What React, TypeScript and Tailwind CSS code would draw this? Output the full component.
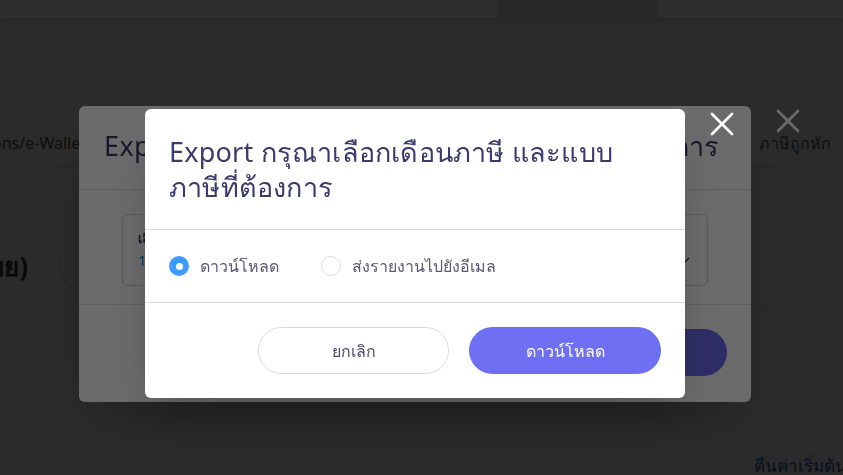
import React, { useState } from 'react';

function CloseIcon({ className }: { className: string }) {
  return (
    <svg viewBox="0 0 24 24" className={className} fill="none" stroke="currentColor" strokeWidth="2.6" strokeLinecap="round">
      <line x1="2" y1="2" x2="22" y2="22" />
      <line x1="22" y1="2" x2="2" y2="22" />
    </svg>
  );
}

function Radio({ checked, label, onClick }: { checked: boolean; label: string; onClick: () => void }) {
  return (
    <button type="button" onClick={onClick} className="flex items-center gap-[11px]">
      {checked ? (
        <span className="w-5 h-5 rounded-full bg-[#3d9bff] flex items-center justify-center">
          <span className="w-[7px] h-[7px] rounded-full bg-white" />
        </span>
      ) : (
        <span className="w-5 h-5 rounded-full border border-[#dcdce5] bg-white" />
      )}
      <span className="text-[16px] leading-6 text-[#5a5a76]">{label}</span>
    </button>
  );
}

export default function App() {
  const [mode, setMode] = useState<'download' | 'email'>('download');

  return (
    <div className="min-h-screen bg-[#f0f0f0] font-['Noto_Sans','Open_Sans',sans-serif] overflow-hidden">
      {/* Page behind the modals */}
      <header className="h-[18px] bg-white shadow-md flex">
        <div className="w-[497px]" />
        <div className="w-[161px] bg-[#dedede]" />
        <div className="flex-1" />
      </header>

      <div className="mt-[102px] h-[47px] border-b border-[#d6d6d6] flex items-center justify-between">
        <div className="w-[86px] overflow-hidden flex justify-end">
          <span className="whitespace-nowrap text-[16px] text-[#555]">Transactions/e-Wallet</span>
        </div>
        <span className="whitespace-nowrap text-[16px] text-[#555] pr-[12px]">ภาษีถูกหัก</span>
      </div>

      <div className="h-[140px] border-b border-[#d6d6d6] flex items-start gap-[31px] pt-[75px]">
        <div className="w-[28px] overflow-hidden flex justify-end">
          <span className="whitespace-nowrap text-[26px] leading-[49px] font-bold text-[#333]">(ภาษาไทย)</span>
        </div>
        <div className="w-[49px] h-[49px] rounded-full border border-[#cfcfcf]" />
      </div>

      <div className="mt-[146px] flex justify-end">
        <span className="whitespace-nowrap text-[17px] text-[#2e5f9e] -mr-[4px]">คืนค่าเริ่มต้น</span>
      </div>

      {/* First modal */}
      <div className="fixed inset-0 z-10 bg-black/[0.57] flex justify-center items-start pt-[106px] pr-[13px]">
        <div className="relative w-[672px] h-[296px] bg-white rounded-md shadow-2xl flex flex-col">
          <button type="button" className="absolute left-[calc(100%+25px)] top-[3px] text-white">
            <CloseIcon className="w-6 h-6" />
          </button>
          <div className="h-[84px] px-[25px] pt-[22px] border-b border-[#dcdce8] overflow-hidden">
            <h2 className="whitespace-nowrap text-[27px] leading-[35px] tracking-[0.4px] text-[#3b3b6d]">
              Export กรุณาเลือกเดือนภาษี และแบบภาษีที่ต้องการ
            </h2>
          </div>
          <div className="px-[43px] pt-[24px] pb-[18px] border-b border-[#dcdce8]">
            <div className="h-[72px] rounded-md border border-[#d3d3de] px-[15px] py-[10px] flex items-center justify-between">
              <div className="flex flex-col">
                <span className="text-[13px] font-bold text-[#3b3b6d]">เลือกเดือนภาษี</span>
                <span className="text-[15px] text-[#2f7fd8]">1 ม.ค. 2566 - 31 ธ.ค. 2566</span>
              </div>
              <svg viewBox="0 0 12 8" className="w-3 h-2 mt-[22px] mr-[2px]" fill="none" stroke="#3b3b6d" strokeWidth="1.5">
                <polyline points="1,1 6,6 11,1" />
              </svg>
            </div>
          </div>
          <div className="flex-1 flex justify-end items-start gap-5 pt-[24px] pr-[24px]">
            <div className="w-[191px] h-[47px] rounded-full border border-[#d9d9e6]" />
            <div className="w-[192px] h-[47px] rounded-full bg-[#6e6ff2]" />
          </div>
        </div>
      </div>

      {/* Second modal */}
      <div className="fixed inset-0 z-20 bg-black/[0.58] flex justify-center items-start pt-[109px] pr-[13px]">
        <div className="relative w-[540px] h-[289px] bg-white rounded-md shadow-2xl flex flex-col">
          <button type="button" className="absolute left-[calc(100%+25px)] top-[3px] text-white">
            <CloseIcon className="w-6 h-6" />
          </button>
          <div className="px-6 pt-[25px] pb-[25px] border-b border-[#dcdce8]">
            <h2 className="text-[27px] leading-[35px] tracking-[0.2px] text-[#3b3b6d]">
              Export กรุณาเลือกเดือนภาษี และแบบ
              <br />
              ภาษีที่ต้องการ
            </h2>
          </div>
          <div className="px-6 py-[24px] border-b border-[#dcdce8] flex items-center gap-[42px]">
            <Radio checked={mode === 'download'} label="ดาวน์โหลด" onClick={() => setMode('download')} />
            <Radio checked={mode === 'email'} label="ส่งรายงานไปยังอีเมล" onClick={() => setMode('email')} />
          </div>
          <div className="flex-1 flex justify-end items-start gap-5 pt-[24px] pr-[24px]">
            <button type="button" className="w-[191px] h-[47px] rounded-full border border-[#d9d9e6] bg-white text-[16px] text-[#4d4d6b]">
              ยกเลิก
            </button>
            <button type="button" className="w-[192px] h-[47px] rounded-full bg-[#6e6ff2] text-[16px] text-white">
              ดาวน์โหลด
            </button>
          </div>
        </div>
      </div>
    </div>
  );
}
